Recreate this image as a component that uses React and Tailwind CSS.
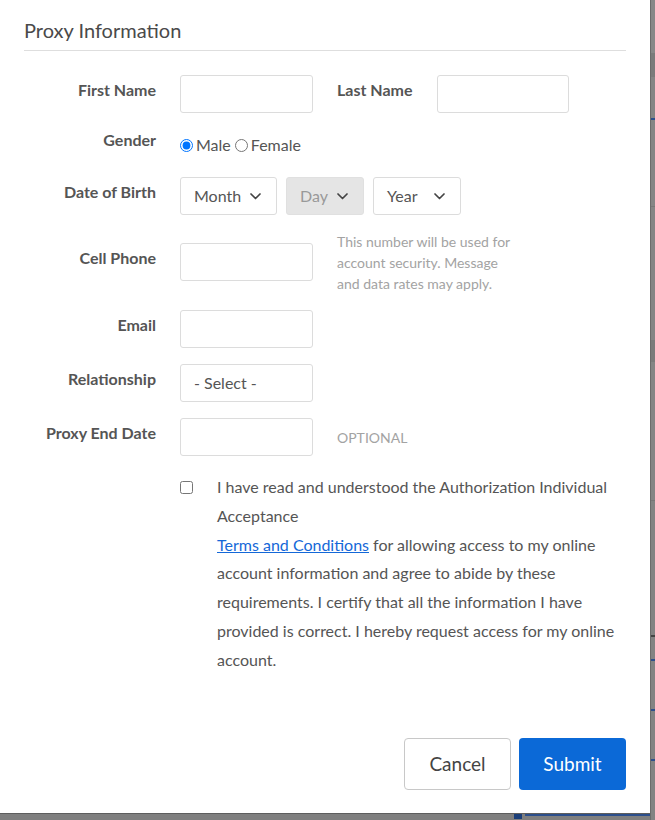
import React from "react";

function Label({ children, w = "w-[132px]" }) {
  return (
    <div className={`${w} shrink-0 text-right pt-[6px] text-[16px] leading-[18px] font-bold text-[#555]`}>
      {children}
    </div>
  );
}

function TextInput({ w = "w-[133px]" }) {
  return (
    <input
      type="text"
      className={`${w} h-[38px] shrink-0 border border-[#dcdcdc] rounded-[3px] bg-white outline-none`}
    />
  );
}

function Chevron() {
  return (
    <svg width="11" height="7" viewBox="0 0 11 7" fill="none">
      <path d="M1 1l4.5 4.5L10 1" stroke="#444" strokeWidth="1.7" strokeLinecap="round" strokeLinejoin="round" />
    </svg>
  );
}

function FakeSelect({ text, w, disabled }) {
  return (
    <div
      className={`${w} h-[38px] shrink-0 flex items-center justify-between pl-[13px] pr-[15px] border rounded-[3px] text-[16px] ${
        disabled ? "bg-[#e5e5e5] border-[#e0e0e0] text-[#999]" : "bg-white border-[#dcdcdc] text-[#555]"
      }`}
    >
      <span>{text}</span>
      <Chevron />
    </div>
  );
}

export default function App() {
  return (
    <div className="flex w-[655px] h-[820px] bg-[#7f7f7f] font-['Lato',sans-serif] overflow-hidden">
      <div className="flex flex-col w-[650px] shrink-0">
        <div className="flex flex-col w-[650px] h-[813px] bg-white px-[24px]">
          <div className="pt-[18px] pb-[8px] border-b border-[#dedede] text-[20px] leading-[24px] text-[#4a4a4a]">
            Proxy Information
          </div>

          {/* First / Last name */}
          <div className="mt-[24px] flex items-start gap-[24px]">
            <Label>First Name</Label>
            <TextInput w="w-[133px]" />
            <Label w="w-auto">Last Name</Label>
            <TextInput w="w-[132px]" />
          </div>

          {/* Gender */}
          <div className="mt-[12px] h-[38px] flex items-start gap-[24px]">
            <Label>Gender</Label>
            <div className="pt-[11px] flex items-center text-[16px] leading-[18px] text-[#555]">
              <input type="radio" name="g" defaultChecked className="w-[13px] h-[13px]" />
              <span className="ml-[3px]">Male</span>
              <input type="radio" name="g" className="w-[13px] h-[13px] ml-[4px]" />
              <span className="ml-[3px]">Female</span>
            </div>
          </div>

          {/* DOB */}
          <div className="mt-[14px] flex items-start gap-[24px]">
            <Label>Date of Birth</Label>
            <div className="flex gap-[9px]">
              <FakeSelect text="Month" w="w-[97px]" />
              <FakeSelect text="Day" w="w-[78px]" disabled />
              <FakeSelect text="Year" w="w-[88px]" />
            </div>
          </div>

          {/* Cell phone */}
          <div className="mt-[28px] flex items-start gap-[24px]">
            <Label>Cell Phone</Label>
            <TextInput />
            <div className="-mt-[12px] w-[182px] text-[14px] leading-[21px] text-[#a3a3a3]">
              This number will be used for account security. Message and data rates may apply.
            </div>
          </div>

          {/* Email */}
          <div className="mt-[16px] flex items-start gap-[24px]">
            <Label>Email</Label>
            <TextInput />
          </div>

          {/* Relationship */}
          <div className="mt-[16px] flex items-start gap-[24px]">
            <Label>Relationship</Label>
            <div className="w-[133px] h-[38px] flex items-center pl-[13px] border border-[#dcdcdc] rounded-[3px] text-[16px] text-[#555]">
              - Select -
            </div>
          </div>

          {/* Proxy end date */}
          <div className="mt-[16px] flex items-start gap-[24px]">
            <Label>Proxy End Date</Label>
            <div className="flex items-center gap-[24px]">
              <TextInput />
              <span className="text-[14px] text-[#a3a3a3]">OPTIONAL</span>
            </div>
          </div>

          {/* Agreement */}
          <div className="mt-[17px] pl-[156px] flex items-start gap-[24px]">
            <div className="pt-[8px] flex">
              <input type="checkbox" className="w-[13px] h-[13px]" />
            </div>
            <div className="w-[409px] text-[16px] leading-[28.8px] text-[#555]">
              I have read and understood the Authorization Individual Acceptance
              <br />
              <a href="#" className="text-[#1468d8] underline">Terms and Conditions</a> for allowing access to my
              online account information and agree to abide by these requirements. I certify that all the
              information I have provided is correct. I hereby request access for my online account.
            </div>
          </div>

          {/* Buttons */}
          <div className="mt-auto pb-[23px] flex justify-end gap-[8px]">
            <button className="w-[107px] h-[52px] border border-[#c8c8c8] rounded-[4px] bg-white text-[19px] text-[#444]">
              Cancel
            </button>
            <button className="w-[107px] h-[52px] rounded-[4px] bg-[#0b69d7] text-[19px] text-white">
              Submit
            </button>
          </div>
        </div>
        <div className="h-[7px] flex border-t border-[#5e5e5e]">
          <div className="w-[514px]" />
          <div className="w-[8px] h-[5px] bg-[#1b3f7a]" />
          <div className="w-[3px]" />
          <div className="flex-1 h-[2px] bg-[#2c4f8c]" />
        </div>
      </div>
      <div className="flex flex-col w-[5px] border-l border-[#6c6c6c]">
        <div className="h-[53px] bg-[#888]" />
        <div className="h-[24px] bg-[#7b7b7b]" />
        <div className="h-[41px] bg-[#858585]" />
        <div className="h-[2px] bg-[#2c4f8c]" />
        <div className="h-[86px] bg-[#858585]" />
        <div className="h-[1px] bg-[#777]" />
        <div className="h-[133px] bg-[#858585]" />
        <div className="h-[22px] bg-[#7b7b7b]" />
        <div className="h-[138px] bg-[#858585]" />
        <div className="h-[1px] bg-[#777]" />
        <div className="h-[134px] bg-[#838383]" />
        <div className="h-[2px] bg-[#444]" />
        <div className="h-[22px] bg-[#838383]" />
        <div className="h-[2px] bg-[#2c4f8c]" />
        <div className="h-[48px] bg-[#838383]" />
        <div className="h-[2px] bg-[#2c4f8c]" />
        <div className="h-[48px] bg-[#838383]" />
        <div className="h-[2px] bg-[#2c4f8c]" />
        <div className="flex-1 bg-[#838383]" />
      </div>
    </div>
  );
}
